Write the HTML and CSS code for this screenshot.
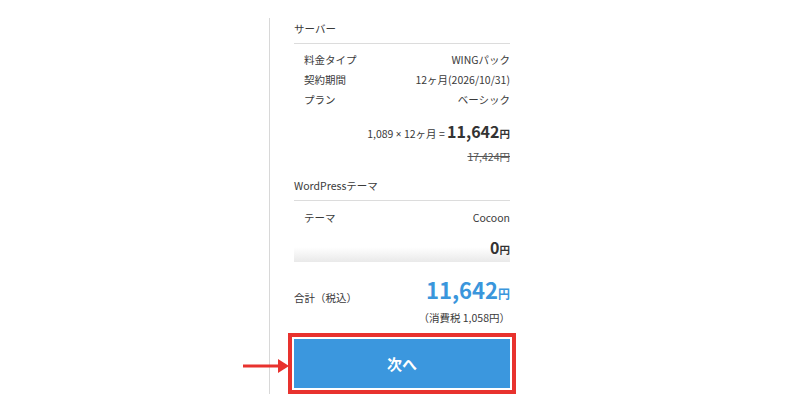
FILE: index.html
```html
<!DOCTYPE html>
<html lang="ja">
<head>
<meta charset="utf-8">
<link rel="stylesheet" href="styles.css">
</head>
<body>
<div class="panel">
  <div class="sec-head">サーバー</div>
  <div class="rows">
    <div class="row"><span>料金タイプ</span><span>WINGパック</span></div>
    <div class="row"><span>契約期間</span><span>12ヶ月(2026/10/31)</span></div>
    <div class="row"><span>プラン</span><span>ベーシック</span></div>
  </div>
  <div class="calc">1,089 <span class="x">×</span> 12ヶ月 = <b class="amt">11,642</b><b class="yen">円</b></div>
  <div class="old">17,424円</div>

  <div class="sec-head sec-head2">WordPressテーマ</div>
  <div class="rows rows2">
    <div class="row"><span>テーマ</span><span>Cocoon</span></div>
  </div>
  <div class="zero"><b class="amt">0</b><b class="yen">円</b></div>

  <div class="total">
    <span class="total-label">合計（税込）</span>
    <span class="total-val"><b class="big">11,642</b><b class="big-yen">円</b></span>
  </div>
  <div class="tax">（消費税 1,058円）</div>

  <div class="btn-wrap">
    <div class="btn">次へ</div>
  </div>
  <svg class="arrow" width="46" height="14" viewBox="0 0 46 14">
    <rect x="0" y="5.5" width="37" height="3" fill="#e8322e"/>
    <polygon points="35,0 46,7 35,14" fill="#e8322e"/>
  </svg>
</div>
</body>
</html>
```

FILE: styles.css
```css
html, body {
  margin: 0;
  padding: 0;
  background: #fff;
}
body {
  font-family: "Noto Sans CJK JP", "Noto Sans", sans-serif;
  color: #3a3a3a;
  font-size: 10.5px;
  min-height: 420px;
}
.panel {
  position: relative;
  margin: 18px 0 0 269px;
  width: 216px;
  border-left: 1px solid #d8d8d8;
  padding-left: 24px;
}
.sec-head {
  line-height: 20px;
  padding-top: 1px;
  padding-bottom: 4px;
  border-bottom: 1px solid #dcdcdc;
}
.sec-head2 {
  margin-top: 9px;
  padding-top: 0;
}
.rows {
  padding: 6px 0 0 10px;
}
.rows2 {
  padding-top: 7px;
}
.row {
  display: flex;
  justify-content: space-between;
  line-height: 20px;
}
.calc {
  margin-top: 9px;
  text-align: right;
  line-height: 24px;
}
.x {
  font-family: "Noto Sans", sans-serif;
  font-size: 10px;
}
.amt {
  font-size: 16px;
  font-weight: 700;
  color: #333;
}
.yen {
  font-size: 10.5px;
  font-weight: 700;
  color: #333;
}
.old {
  text-align: right;
  line-height: 20px;
  margin-top: 1px;
  text-decoration: line-through;
  color: #555;
}
.zero {
  margin-top: 7px;
  text-align: right;
  line-height: 24px;
  background: linear-gradient(to bottom, rgba(235,235,235,0) 45%, #e9e9e9 100%);
}
.total {
  margin-top: 17px;
  display: flex;
  justify-content: space-between;
  align-items: flex-end;
  height: 32px;
}
.total-label {
  line-height: 20px;
  margin-bottom: 3px;
}
.total-val {
  line-height: 32px;
  color: #3a96dc;
}
.big {
  font-size: 22px;
  font-weight: 700;
}
.big-yen {
  font-size: 12px;
  font-weight: 700;
}
.tax {
  text-align: right;
  line-height: 20px;
  margin-top: -3px;
}
.btn-wrap {
  position: relative;
  z-index: 1;
  margin: 5px 0 -6px -6px;
  width: 216px;
  border: 4px solid #e8322e;
  padding: 2px;
  background: #fff;
}
.btn {
  height: 49px;
  background: #3b97de;
  color: #fff;
  font-weight: 700;
  font-size: 15px;
  display: flex;
  align-items: center;
  justify-content: center;
}
.arrow {
  position: absolute;
  z-index: 2;
  left: -27px;
  top: 341px;
}
```
